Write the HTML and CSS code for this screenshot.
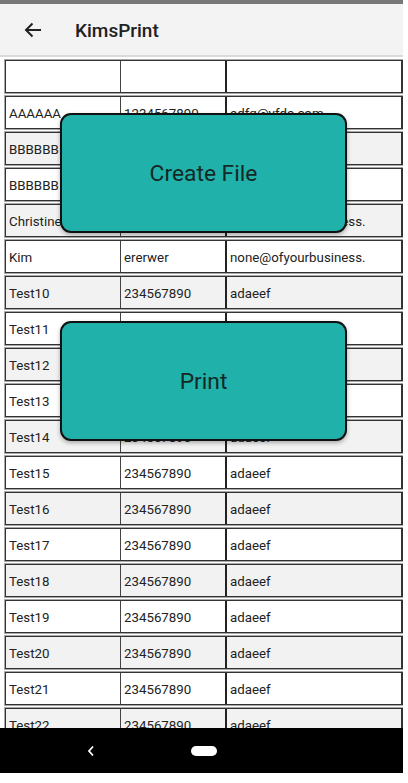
FILE: index.html
```html
<!DOCTYPE html>
<html>
<head>
<meta charset="utf-8">
<link rel="stylesheet" href="styles.css">
</head>
<body>
<div class="screen">
  <div class="statusbar"></div>
  <header class="appbar">
    <svg class="back" width="18" height="16" viewBox="0 0 18 16"><path d="M17 8H2.5M8.5 1.5L2 8l6.5 6.5" fill="none" stroke="#222" stroke-width="2"/></svg>
    <span class="title">KimsPrint</span>
  </header>
  <main class="content">
    <div class="table">
      <div class="row"><div class="c1"></div><div class="c2"></div><div class="c3"></div></div>
      <div class="row"><div class="c1">AAAAAA</div><div class="c2">1234567890</div><div class="c3">adfg@yfdc.com</div></div>
      <div class="row alt"><div class="c1">BBBBBB</div><div class="c2">1234</div><div class="c3">b@b.c</div></div>
      <div class="row"><div class="c1">BBBBBB</div><div class="c2">1234</div><div class="c3">b@b.c</div></div>
      <div class="row alt"><div class="c1">Christine</div><div class="c2">ererwer</div><div class="c3">none@ofyourbusiness.</div></div>
      <div class="row"><div class="c1">Kim</div><div class="c2">ererwer</div><div class="c3">none@ofyourbusiness.</div></div>
      <div class="row alt"><div class="c1">Test10</div><div class="c2">234567890</div><div class="c3">adaeef</div></div>
      <div class="row"><div class="c1">Test11</div><div class="c2">234567890</div><div class="c3">adaeef</div></div>
      <div class="row alt"><div class="c1">Test12</div><div class="c2">234567890</div><div class="c3">adaeef</div></div>
      <div class="row"><div class="c1">Test13</div><div class="c2">234567890</div><div class="c3">adaeef</div></div>
      <div class="row alt"><div class="c1">Test14</div><div class="c2">234567890</div><div class="c3">adaeef</div></div>
      <div class="row"><div class="c1">Test15</div><div class="c2">234567890</div><div class="c3">adaeef</div></div>
      <div class="row alt"><div class="c1">Test16</div><div class="c2">234567890</div><div class="c3">adaeef</div></div>
      <div class="row"><div class="c1">Test17</div><div class="c2">234567890</div><div class="c3">adaeef</div></div>
      <div class="row alt"><div class="c1">Test18</div><div class="c2">234567890</div><div class="c3">adaeef</div></div>
      <div class="row"><div class="c1">Test19</div><div class="c2">234567890</div><div class="c3">adaeef</div></div>
      <div class="row alt"><div class="c1">Test20</div><div class="c2">234567890</div><div class="c3">adaeef</div></div>
      <div class="row"><div class="c1">Test21</div><div class="c2">234567890</div><div class="c3">adaeef</div></div>
      <div class="row alt"><div class="c1">Test22</div><div class="c2">234567890</div><div class="c3">adaeef</div></div>
    </div>
    <button class="bigbtn btn-create">Create File</button>
    <button class="bigbtn btn-print">Print</button>
  </main>
  <nav class="navbar">
    <svg class="navback" width="8" height="12" viewBox="0 0 8 12"><path d="M6 1.5L2 6l4 4.5" fill="none" stroke="#fff" stroke-width="1.8"/></svg>
    <span class="pill"></span>
  </nav>
</div>
</body>
</html>
```
FILE: styles.css
```css
html, body {
  margin: 0;
  padding: 0;
  background: #ffffff;
}
.screen {
  width: 403px;
  height: 773px;
  display: flex;
  flex-direction: column;
  overflow: hidden;
  background: #ffffff;
  font-family: Roboto, "Noto Sans", sans-serif;
}
.statusbar {
  height: 4px;
  background: #777777;
  flex: none;
}
.appbar {
  height: 53px;
  flex: none;
  background: #f3f3f3;
  border-bottom: 2px solid #dadada;
  box-sizing: border-box;
  display: flex;
  align-items: center;
  padding-left: 24px;
}
.back {
  display: block;
  margin-top: 1px;
}
.title {
  margin-left: 33px;
  font-size: 19px;
  font-weight: 500;
  color: #212121;
  margin-top: 1px;
}
.content {
  position: relative;
  flex: 1;
  overflow: hidden;
}
.table {
  display: flex;
  flex-direction: column;
  gap: 3px;
  padding: 3px 0 0 5px;
}
.row {
  display: flex;
  height: 33px;
  box-sizing: border-box;
  border: 1px solid #333333;
  border-right-width: 2px;
  box-shadow: 0 0 0 1px #a8a8a8;
  background: #ffffff;
  font-size: 13.3px;
  color: #222222;
  flex: none;
}
.row.alt {
  background: #f2f2f2;
}
.row > div {
  display: flex;
  align-items: center;
  padding-left: 3px;
  padding-top: 1px;
  box-sizing: border-box;
  white-space: nowrap;
  overflow: hidden;
}
.c1 {
  width: 115px;
  border-right: 1px solid #444444;
}
.c2 {
  width: 106px;
  border-right: 2px solid #222222;
}
.c3 {
  flex: 1;
}
.bigbtn {
  position: absolute;
  left: 60px;
  width: 287px;
  height: 120px;
  background: #20b2aa;
  border: 2px solid #111111;
  border-radius: 11px;
  box-shadow: 0 2px 4px rgba(0,0,0,0.3);
  font-family: Roboto, "Noto Sans", sans-serif;
  font-size: 22.8px;
  color: #142826;
  padding: 0;
  cursor: pointer;
}
.btn-create {
  top: 56px;
}
.btn-print {
  top: 264px;
}
.navbar {
  height: 45px;
  flex: none;
  background: #000000;
  position: relative;
  display: flex;
  align-items: center;
}
.navback {
  margin-left: 87px;
  display: block;
}
.pill {
  margin-left: 96px;
  width: 26px;
  height: 10px;
  border-radius: 5px;
  background: #ffffff;
}
```
